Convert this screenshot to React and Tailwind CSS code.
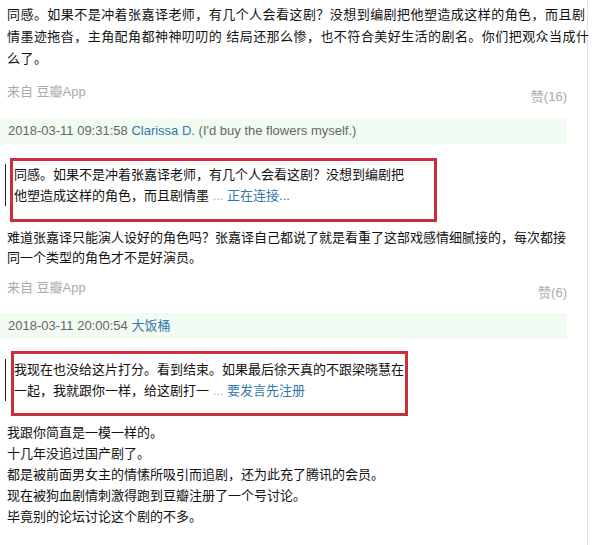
import React from 'react'

const cjk = { fontFamily: '"Liberation Sans", "Noto Sans CJK SC", sans-serif' }

function Lines({ lines, className = '' }) {
  return (
    <div className={className}>
      {lines.map((l, i) => (
        <div key={i} className="whitespace-nowrap">
          {l}
        </div>
      ))}
    </div>
  )
}

function Meta({ likes, top = '' }) {
  return (
    <div className={`flex justify-between items-start text-[13px] text-[#aaa] leading-[22px] ${top}`}>
      <span>来自 豆瓣App</span>
      <span className="mt-[5px]">赞({likes})</span>
    </div>
  )
}

function Header({ date, name, sig, className = '' }) {
  return (
    <div className={`-ml-[7px] pl-[8px] h-[26px] flex items-center bg-[#f2fbf2] text-[13px] text-[#666] ${className}`}>
      <span>{date}&nbsp;</span>
      <span className="text-[#3377aa]">{name}</span>
      {sig && <span>&nbsp;{sig}</span>}
    </div>
  )
}

function Quote({ first, second, link, box, className = '' }) {
  return (
    <div className={`relative ml-[-2px] border-l border-[#222] pl-[8px] leading-[21px] text-[13px] text-[#111] ${className}`}>
      <div className="whitespace-nowrap">{first}</div>
      <div className="whitespace-nowrap">
        {second} <span className="text-[#aac]">...</span> <span className="text-[#3377aa]">{link}</span>
      </div>
      <div className={`absolute border-[3px] border-[#c9303b] ${box}`} />
    </div>
  )
}

export default function App() {
  return (
    <div className="w-[599px] h-[545px] bg-white overflow-hidden" style={cjk}>
      <div className="w-[588px] h-full border-r border-[#e2e2e2] pl-[7px] pr-[20px]">
        <Lines
          className="pt-[4px] text-[13px] leading-[22px] tracking-[0.45px] text-[#111]"
          lines={[
            '同感。如果不是冲着张嘉译老师，有几个人会看这剧？没想到编剧把他塑造成这样的角色，而且剧',
            '情墨迹拖沓，主角配角都神神叨叨的 结局还那么惨，也不符合美好生活的剧名。你们把观众当成什',
            '么了。',
          ]}
        />
        <Meta likes={16} top="mt-[11px]" />
        <Header
          className="mt-[10px]"
          date="2018-03-11 09:31:58"
          name="Clarissa D."
          sig="(I'd buy the flowers myself.)"
        />
        <Quote
          className="mt-[20px]"
          first="同感。如果不是冲着张嘉译老师，有几个人会看这剧？没想到编剧把"
          second="他塑造成这样的角色，而且剧情墨"
          link="正在连接..."
          box="left-[4px] -top-[6px] w-[427px] h-[64px]"
        />
        <Lines
          className="mt-[22px] text-[13px] leading-[20px] text-[#111]"
          lines={[
            '难道张嘉译只能演人设好的角色吗？张嘉译自己都说了就是看重了这部戏感情细腻接的，每次都接',
            '同一个类型的角色才不是好演员。',
          ]}
        />
        <Meta likes={6} top="mt-[9px]" />
        <Header className="mt-[9px]" date="2018-03-11 20:00:54" name="大饭桶" />
        <Quote
          className="mt-[20px]"
          first="我现在也没给这片打分。看到结束。如果最后徐天真的不跟梁晓慧在"
          second="一起，我就跟你一样，给这剧打一"
          link="要发言先注册"
          box="left-[5px] -top-[8px] w-[397px] h-[65px]"
        />
        <Lines
          className="mt-[21px] text-[13px] leading-[21px] text-[#111]"
          lines={[
            '我跟你简直是一模一样的。',
            '十几年没追过国产剧了。',
            '都是被前面男女主的情愫所吸引而追剧，还为此充了腾讯的会员。',
            '现在被狗血剧情刺激得跑到豆瓣注册了一个号讨论。',
            '毕竟别的论坛讨论这个剧的不多。',
          ]}
        />
      </div>
    </div>
  )
}
